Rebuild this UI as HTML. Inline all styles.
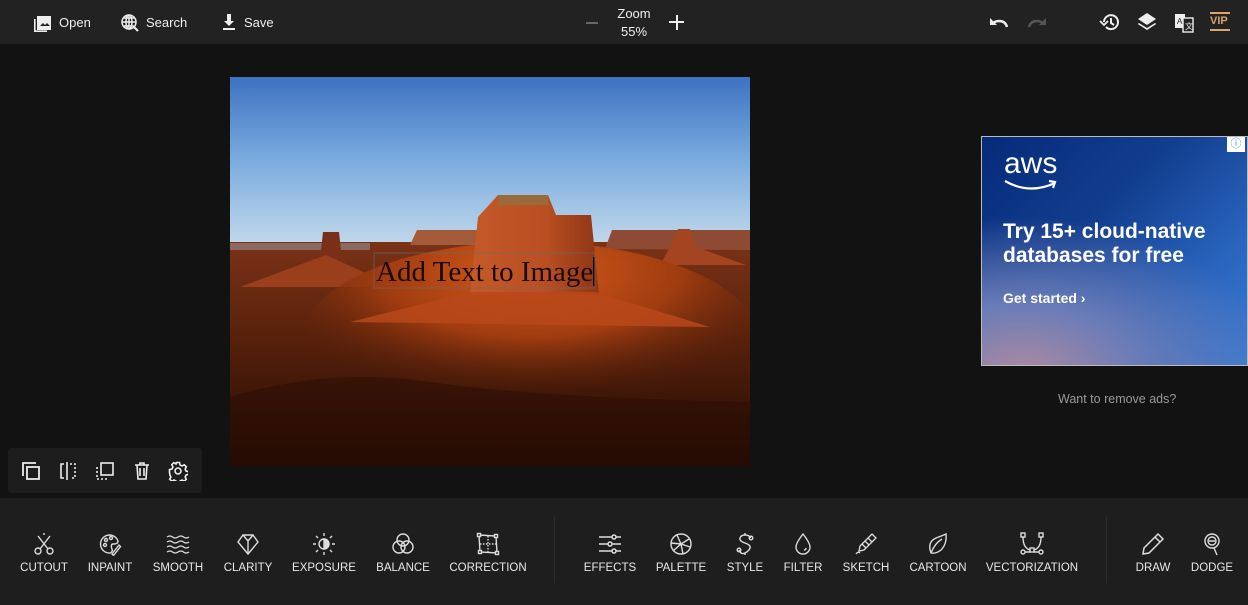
<!DOCTYPE html>
<html><head><meta charset="utf-8"><style>
*{margin:0;padding:0;box-sizing:border-box}
body{width:1248px;height:605px;background:#121212;font-family:"Liberation Sans",Arial,sans-serif;color:#eee;position:relative;overflow:hidden}
.top{position:absolute;left:0;top:0;width:1248px;height:44px;background:#222}
.t{position:absolute;font-size:13px;color:#eee;top:15px}
.ic{position:absolute}
.bot{position:absolute;left:0;top:498px;width:1248px;height:107px;background:#1e1e1e}
.it{position:absolute;top:532px;width:100px;margin-left:-50px;text-align:center;font-size:11.5px;color:#e8e8e8}
.it svg{display:block;margin:0 auto 6px;width:24px;height:24px}
.sep{position:absolute;top:517px;width:1px;height:66px;background:#2e2e2e}
.tb{position:absolute;left:8px;top:448px;width:194px;height:45px;background:#1d1d1d;border-radius:3px}
</style></head><body>
<div class="top"></div>
<svg class="ic" style="left:33px;top:13px" width="20" height="20" viewBox="0 0 20 20" fill="#eee"><path d="M4 3h14v14H4z"/><path d="M1 6v13h13v-1.6H2.6V6z"/><path d="M7 13l3-3 2 2 2-2 3 3z" fill="#222"/></svg>
<div class="t" style="left:59px">Open</div>
<svg class="ic" style="left:120px;top:13px" width="20" height="20" viewBox="0 0 20 20" fill="none" stroke="#eee" stroke-width="1.5"><circle cx="9" cy="9" r="7"/><path d="M2 9h14M9 2v14M4 5h10M4 13h10"/><ellipse cx="9" cy="9" rx="3" ry="7"/><path d="M14 14l4 4" stroke-width="2"/></svg>
<div class="t" style="left:146px">Search</div>
<svg class="ic" style="left:220px;top:13px" width="18" height="18" viewBox="0 0 18 18" fill="#eee"><path d="M7 1h4v7h3l-5 5-5-5h3z"/><path d="M3 15h12v2H3z"/></svg>
<div class="t" style="left:244px">Save</div>
<div style="position:absolute;left:586px;top:22px;width:12px;height:1.5px;background:#666"></div>
<div style="position:absolute;left:612px;top:5px;width:44px;text-align:center;font-size:13px;line-height:18px">Zoom<br>55%</div>
<div style="position:absolute;left:669px;top:21px;width:15px;height:2px;background:#eee"></div>
<div style="position:absolute;left:675.5px;top:15px;width:2px;height:15px;background:#eee"></div>
<svg class="ic" style="left:988px;top:13px" width="22" height="18" viewBox="0 0 22 18" fill="none" stroke="#eee" stroke-width="2.4"><path d="M19 14c-1-4-4-6-8-6-3 0-5 1-7 3"/><path d="M2 5l0 7 7 0z" fill="#eee" stroke="none"/></svg>
<svg class="ic" style="left:1026px;top:13px" width="22" height="18" viewBox="0 0 22 18" fill="none" stroke="#555" stroke-width="2.4"><path d="M3 14c1-4 4-6 8-6 3 0 5 1 7 3"/><path d="M20 5l0 7-7 0z" fill="#555" stroke="none"/></svg>
<svg class="ic" style="left:1099px;top:11px" width="22" height="22" viewBox="0 0 22 22" fill="none" stroke="#eee" stroke-width="2"><path d="M5 11a7 7 0 1 1 2 5"/><path d="M1 10l4 4 4-4" stroke-width="1.8"/><path d="M12 7v5l3 2"/></svg>
<svg class="ic" style="left:1137px;top:12px" width="20" height="20" viewBox="0 0 20 20" fill="#eee"><path d="M10 1l9 6-9 6-9-6z"/><path d="M2 11l8 5 8-5 1.2 1-9.2 6-9.2-6z"/></svg>
<svg class="ic" style="left:1174px;top:13px" width="20" height="20" viewBox="0 0 20 20"><rect x="1" y="1" width="10" height="14" fill="#eee"/><rect x="9" y="5" width="10" height="14" fill="#222" stroke="#eee" stroke-width="1.4"/><text x="3" y="11" font-size="8" fill="#222" font-family="Liberation Sans">A</text><text x="11" y="16" font-size="8" fill="#eee" font-family="Liberation Sans">文</text></svg>
<div style="position:absolute;left:1210px;top:12px;width:20px;height:2px;background:#d9a56a"></div>
<div style="position:absolute;left:1210px;top:15px;font-size:11px;font-weight:bold;color:#d9a56a">VIP</div>
<div style="position:absolute;left:1210px;top:29px;width:20px;height:2px;background:#d9a56a"></div>

<svg style="position:absolute;left:230px;top:77px" width="520" height="389" viewBox="0 0 520 389">
<defs>
<linearGradient id="sky" x1="0" y1="0" x2="0" y2="1"><stop offset="0" stop-color="#3d72c2"/><stop offset="0.5" stop-color="#7eaee0"/><stop offset="1" stop-color="#c8dcec"/></linearGradient>
<linearGradient id="gr" x1="0" y1="0" x2="0" y2="1"><stop offset="0" stop-color="#7a3218"/><stop offset="0.4" stop-color="#5a220c"/><stop offset="1" stop-color="#200a04"/></linearGradient>
<linearGradient id="bt" x1="0" y1="0" x2="1" y2="0"><stop offset="0" stop-color="#c45a28"/><stop offset="0.6" stop-color="#b84e22"/><stop offset="1" stop-color="#8e3514"/></linearGradient>
<radialGradient id="sl" cx="0.5" cy="0.15" r="0.65"><stop offset="0" stop-color="#d65a1c"/><stop offset="0.5" stop-color="#a03c10"/><stop offset="1" stop-color="#4a1a08" stop-opacity="0"/></radialGradient>
</defs>
<rect width="520" height="175" fill="url(#sky)"/>
<rect y="165" width="520" height="224" fill="url(#gr)"/>
<path d="M0 166h140v7H0z" fill="#8a6a60"/>
<path d="M180 168l7-15h60v15z" fill="#a55a3a"/>
<path d="M375 172l7-19h138v20z" fill="#8f4a34"/>
<path d="M90 182l3-27h16l3 27z" fill="#7a3018"/>
<path d="M10 210L96 178l70 32z" fill="#9a3e1c"/>
<path d="M440 170l8-18h12l6 18 50 18H430z" fill="#a44420"/>
<ellipse cx="300" cy="265" rx="230" ry="100" fill="url(#sl)"/>
<path d="M248 140l20-22h50l8 20h35l3 30 5 50H240z" fill="url(#bt)"/>
<path d="M268 118h50v10h-50z" fill="#9a6a3a"/>
<path d="M120 245l120-30h125l115 35z" fill="#b8481a" opacity="0.85"/>
<path d="M0 320q100-30 200-15t320 20v64H0z" fill="#2a0c04" opacity="0.5"/>
<rect x="144" y="176" width="221" height="35" fill="none" stroke="#6a6a70" stroke-width="1" opacity="0.6"/>
<text x="146" y="204" font-family="Liberation Serif" font-size="29" fill="#1a0a05">Add Text to Image</text>
<rect x="363" y="180" width="1.5" height="29" fill="#111"/>
</svg>

<div class="tb"></div>
<svg class="ic" style="left:21px;top:461px" width="20" height="20" viewBox="0 0 20 20" fill="none" stroke="#eee" stroke-width="1.8"><path d="M2 15V2h13"/><rect x="6" y="6" width="12" height="12"/></svg>
<svg class="ic" style="left:58px;top:461px" width="20" height="20" viewBox="0 0 20 20" fill="none" stroke="#eee" stroke-width="1.6"><path d="M9 1v18"/><path d="M6 3H3v14h3"/><path d="M12 3h5v14h-5" stroke-dasharray="2 2"/></svg>
<svg class="ic" style="left:95px;top:461px" width="20" height="20" viewBox="0 0 20 20" fill="none" stroke="#eee" stroke-width="1.6"><rect x="6" y="2" width="12" height="12"/><path d="M2 6v12h12" stroke-dasharray="2 2"/></svg>
<svg class="ic" style="left:132px;top:461px" width="20" height="20" viewBox="0 0 20 20" fill="none" stroke="#eee" stroke-width="1.6"><path d="M3 4h14M8 4V2h4v2M5 4l1 14h8l1-14M8 7v8M12 7v8"/></svg>
<svg class="ic" style="left:168px;top:461px" width="20" height="20" viewBox="0 0 20 20" fill="none" stroke="#eee" stroke-width="1.6"><circle cx="10" cy="10" r="3"/><path d="M8.5 1.5h3l.5 2.5 2 1 2.3-1.2 2 2-1.2 2.3 1 2 2.4.4v3l-2.4.5-1 2 1.2 2.2-2 2-2.3-1.2-2 1-.5 2.5h-3l-.5-2.5-2-1-2.3 1.2-2-2 1.2-2.2-1-2L1.5 11.5v-3L4 8l1-2-1.2-2.3 2-2L8 3z"/></svg>

<div style="position:absolute;left:981px;top:136px;width:267px;height:230px;border:1px solid #bbb;background:radial-gradient(ellipse 260px 160px at 40px 240px,#b08aa0 0%,#6a7cb8 45%,rgba(40,90,180,0) 100%),linear-gradient(135deg,#062a7a 0%,#123e8e 40%,#2a66c0 75%,#3a7ad2 100%)"></div>
<div style="position:absolute;left:1227px;top:137px;width:18px;height:15px;background:#fff;color:#2a9ad8;font-size:11px;text-align:center;line-height:15px">ⓘ</div>
<div style="position:absolute;left:1004px;top:147px;font-size:30px;color:#fff">aws</div>
<svg class="ic" style="left:1003px;top:178px" width="56" height="14" viewBox="0 0 56 14" fill="none" stroke="#fff" stroke-width="2.2"><path d="M2 3q24 14 50 2"/><path d="M46 3l6 1-2 6"/></svg>
<div style="position:absolute;left:1003px;top:220px;font-size:21px;font-weight:bold;color:#fff;line-height:24px">Try 15+ cloud-native<br>databases for free</div>
<div style="position:absolute;left:1003px;top:290px;font-size:14px;font-weight:bold;color:#fff">Get started ›</div>
<div style="position:absolute;left:1058px;top:392px;font-size:12.5px;color:#999">Want to remove ads?</div>

<div class="bot"></div>
<div class="sep" style="left:554px"></div>
<div class="sep" style="left:1106px"></div>
<div class="it" style="left:44px"><svg viewBox="0 0 24 24" fill="none" stroke="#ddd" stroke-width="1.4"><circle cx="6" cy="19" r="3"/><circle cx="18" cy="19" r="3"/><path d="M8 17L18 4M16 17L6 4M12 1v2"/></svg>CUTOUT</div>
<div class="it" style="left:110px"><svg viewBox="0 0 24 24" fill="none" stroke="#ddd" stroke-width="1.4"><path d="M12 21a9 9 0 1 1 8-12c0 3-3 3-5 3s-2 3-1 5-1 4-2 4z"/><circle cx="8" cy="8" r="1.5"/><circle cx="13" cy="6" r="1.5"/><circle cx="7" cy="13" r="1.5"/><path d="M14 22l7-9 1.5 1.5-7 9z"/></svg>INPAINT</div>
<div class="it" style="left:178px"><svg viewBox="0 0 24 24" fill="none" stroke="#ddd" stroke-width="1.3"><path d="M1 5q3-2 5.5 0t5.5 0 5.5 0 5.5 0M1 10q3-2 5.5 0t5.5 0 5.5 0 5.5 0M1 15q3-2 5.5 0t5.5 0 5.5 0 5.5 0M1 20q3-2 5.5 0t5.5 0 5.5 0 5.5 0"/></svg>SMOOTH</div>
<div class="it" style="left:248px"><svg viewBox="0 0 24 24" fill="none" stroke="#ddd" stroke-width="1.4"><path d="M7 3h10l5 7-10 12L2 10z"/><path d="M7 3l5 6 5-6M12 9v13"/></svg>CLARITY</div>
<div class="it" style="left:324px"><svg viewBox="0 0 24 24" fill="none" stroke="#ddd" stroke-width="1.4"><circle cx="12" cy="12" r="5"/><path d="M12 7a5 5 0 0 1 0 10z" fill="#ddd"/><path d="M12 1v3M12 20v3M1 12h3M20 12h3M4 4l2 2M18 18l2 2M4 20l2-2M18 6l2-2"/></svg>EXPOSURE</div>
<div class="it" style="left:403px"><svg viewBox="0 0 24 24" fill="none" stroke="#ddd" stroke-width="1.4"><circle cx="12" cy="8" r="6"/><circle cx="8" cy="15" r="6"/><circle cx="16" cy="15" r="6"/></svg>BALANCE</div>
<div class="it" style="left:488px"><svg viewBox="0 0 24 24" fill="none" stroke="#ddd" stroke-width="1.4"><path d="M3 3l17 1 1 17-17-1z"/><path d="M12 4v16M4 12h16" stroke-dasharray="1.5 1.5"/><rect x="1.5" y="1.5" width="3" height="3" fill="#1e1e1e"/><rect x="18.5" y="2.5" width="3" height="3" fill="#1e1e1e"/><rect x="19.5" y="19.5" width="3" height="3" fill="#1e1e1e"/><rect x="2.5" y="18.5" width="3" height="3" fill="#1e1e1e"/></svg>CORRECTION</div>
<div class="it" style="left:610px"><svg viewBox="0 0 24 24" fill="none" stroke="#ddd" stroke-width="1.5"><path d="M1 5h22M1 12h22M1 19h22"/><circle cx="16" cy="5" r="2" fill="#1e1e1e"/><circle cx="12" cy="12" r="2" fill="#1e1e1e"/><circle cx="16" cy="19" r="2" fill="#1e1e1e"/></svg>EFFECTS</div>
<div class="it" style="left:681px"><svg viewBox="0 0 24 24" fill="none" stroke="#ddd" stroke-width="1.4"><circle cx="12" cy="12" r="10"/><path d="M8 3l4 9M20 7l-8 5M21 15l-9-3M14 22l-2-10M4 19l8-7M2 11l10 1"/></svg>PALETTE</div>
<div class="it" style="left:745px"><svg viewBox="0 0 24 24" fill="none" stroke="#ddd" stroke-width="1.4"><path d="M18 6q-2-3-6-3t-5 3 5 5 5 5-5 5-6-3"/><circle cx="18" cy="6" r="1.8"/><circle cx="6" cy="18" r="1.8"/><path d="M12 1v2M12 21v2"/></svg>STYLE</div>
<div class="it" style="left:803px"><svg viewBox="0 0 24 24" fill="none" stroke="#ddd" stroke-width="1.4"><path d="M12 2q7 9 7 13a7 7 0 0 1-14 0q0-4 7-13z"/><path d="M13 18q2 0 2-2"/></svg>FILTER</div>
<div class="it" style="left:866px"><svg viewBox="0 0 24 24" fill="none" stroke="#ddd" stroke-width="1.3"><path d="M18 2l4 4-12 12-5 1 1-5z"/><path d="M8 12l4 4M11 9l4 4M14 6l4 4M2 22q2-3 4-1"/></svg>SKETCH</div>
<div class="it" style="left:938px"><svg viewBox="0 0 24 24" fill="none" stroke="#ddd" stroke-width="1.4"><path d="M5 21Q1 10 10 6q8-3 10-4 1 10-5 16-5 4-10 3z"/><path d="M5 21q4-10 11-14"/></svg>CARTOON</div>
<div class="it" style="left:1032px"><svg viewBox="0 0 24 24" fill="none" stroke="#ddd" stroke-width="1.4"><rect x="1" y="1" width="4" height="4"/><rect x="19" y="1" width="4" height="4"/><circle cx="3" cy="20" r="2"/><circle cx="21" cy="20" r="2"/><rect x="10" y="16" width="4" height="4"/><path d="M3 5q0 11 7 13M21 5q0 11-7 13M5 20h5M14 20h5"/></svg>VECTORIZATION</div>
<div class="it" style="left:1153px"><svg viewBox="0 0 24 24" fill="none" stroke="#ddd" stroke-width="1.5"><path d="M17 2l5 5L8 21l-6 1 1-6z"/><path d="M14 5l5 5"/></svg>DRAW</div>
<div class="it" style="left:1212px"><svg viewBox="0 0 24 24" fill="none" stroke="#ddd" stroke-width="1.4"><circle cx="12" cy="9" r="7"/><circle cx="12" cy="9" r="4"/><path d="M9 9h6M14 16l3 7"/></svg>DODGE</div>
</body></html>
